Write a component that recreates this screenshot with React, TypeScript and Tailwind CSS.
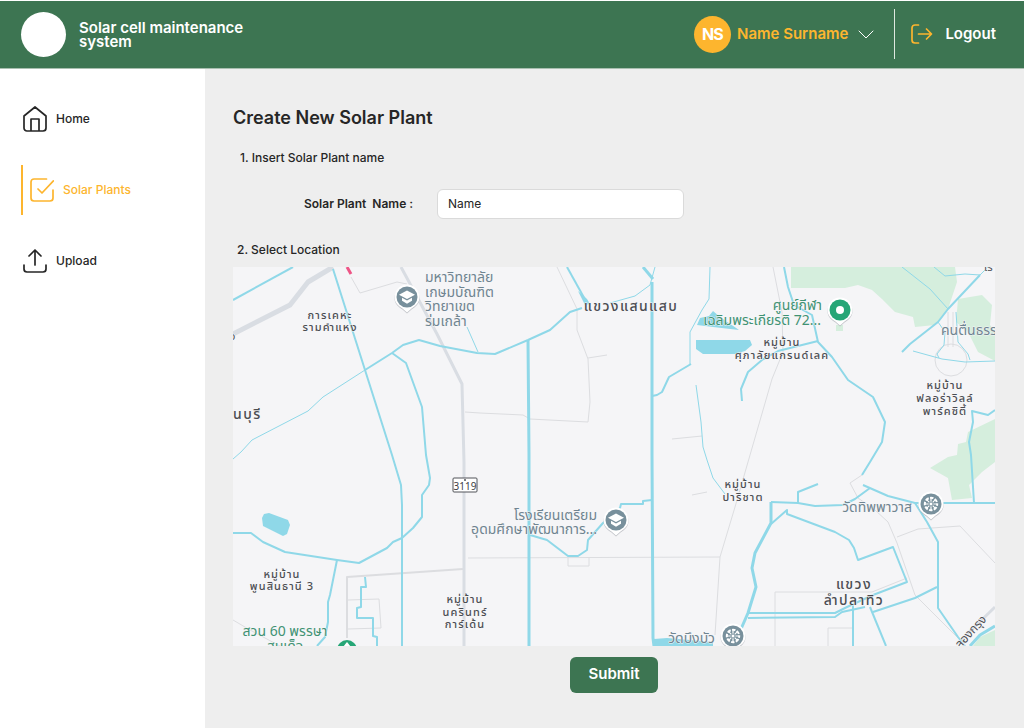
import { useState } from "react";

const WATER = "#8fd8e8";
const PATH_GREY = "#dcdde0";

type Line = { points: string; width: number };

const waterways: Line[] = [
  { points: "0,33 60,0", width: 2 },
  { points: "100,2 132,103 159,188 168,218 169,238 169,379", width: 2 },
  { points: "0,192 8,185 19,173 75,144 90,130 132,103", width: 1 },
  { points: "132,103 159,86 170,78 186,73 207,79 244,86 262,87 295,73 317,63 337,45 349,41", width: 2 },
  { points: "159,86 173,96 189,140 193,188 197,211 196,218 189,228 189,250 180,261 169,271 160,275 154,281 126,296 104,293 52,285 30,275 18,266 0,266", width: 2 },
  { points: "104,293 97,328 95,335 95,355 92,370 84,379", width: 2 },
  { points: "234,60 245,85", width: 1 },
  { points: "334,0 354,36", width: 2 },
  { points: "377,36 402,29 417,18 422,0", width: 1 },
  { points: "410,0 420,12", width: 3 },
  { points: "419,15 419,188 420,371 421,379", width: 3 },
  { points: "295,73 296,188 296,379", width: 3 },
  { points: "477,0 476,32 469,43 457,65 457,97", width: 1 },
  { points: "458,97 436,110 429,125 424,128 419,129", width: 2 },
  { points: "463,118 468,155 470,180 474,193 480,211 492,227", width: 1 },
  { points: "551,0 555,20 561,38 579,48 585,75 599,90 615,113 640,130 652,155 649,175 637,195 629,208", width: 2 },
  { points: "585,74 545,84 529,93 515,105 508,122 509,134", width: 2 },
  { points: "701,0 712,9 732,7 747,8 755,0", width: 1 },
  { points: "747,8 715,42 705,55 677,77 669,85", width: 2 },
  { points: "669,0 697,22 715,42", width: 1 },
  { points: "680,84 709,92 732,95 762,94", width: 1 },
  { points: "705,55 712,65 711,78 704,87 706,91", width: 1 },
  { points: "723,45 725,75 735,87 737,93", width: 1 },
  { points: "762,143 755,148 739,144 740,155 736,175 738,188 741,236", width: 2 },
  { points: "538,235 565,236 582,239 610,238 622,232 637,221", width: 2 },
  { points: "630,218 655,229 682,236 762,236", width: 2 },
  { points: "565,236 565,225 585,217", width: 2 },
  { points: "538,235 538,256 522,286 519,301 523,320 515,346 508,362", width: 3 },
  { points: "538,257 554,243 554,247 602,265 616,273 621,281 625,293 660,280 674,315 640,328 614,340 602,346 515,346", width: 2 },
  { points: "515,351 602,350 609,345 632,340", width: 2 },
  { points: "620,338 620,379", width: 2 },
  { points: "637,340 653,379", width: 2 },
  { points: "640,345 682,331 704,320", width: 2 },
  { points: "682,236 694,255 705,275 705,341 725,370 732,379", width: 2 },
  { points: "762,359 747,368 737,379", width: 3 },
  { points: "419,233 410,234 410,237 388,237 387,241 370,256 355,273 354,283 345,289 335,289 314,273 297,268", width: 2 },
  { points: "132,310 133,320 128,320 128,340 124,341 124,351 140,351 140,369 144,370 144,379", width: 2 },
];

const roads: Line[] = [
  { points: "118,10 127,26 164,15 174,17", width: 1 },
  { points: "232,145 247,146 290,148 297,152 355,155 357,135 355,92 344,63 344,42 324,0", width: 1 },
  { points: "355,91 374,88", width: 1 },
  { points: "439,172 469,169", width: 1 },
  { points: "459,228 474,225", width: 1 },
  { points: "540,0 549,45 550,85 539,112 515,195 502,240 487,290 482,368", width: 1 },
  { points: "629,208 617,216 625,231 642,243 655,255 664,276 682,328 725,371", width: 1 },
  { points: "664,270 685,262 727,259 762,296", width: 1 },
  { points: "542,379 542,325 639,325 674,311", width: 1 },
  { points: "595,379 595,361 619,361", width: 1 },
  { points: "235,291 487,290", width: 1 },
  { points: "335,291 335,299 356,299 356,291", width: 1 },
  { points: "114,371 114,310 230,302", width: 2 },
  { points: "115,333 146,332 148,361 115,362", width: 1 },
  { points: "0,353 17,363 47,379", width: 1 },
  { points: "715,45 715,80", width: 1 },
  { points: "720,45 720,80", width: 1 },
];

const highways: Line[] = [
  { points: "0,67 57,38 75,15 100,0", width: 5 },
  { points: "168,0 204,67 229,117 231,195 231,379", width: 3 },
  { points: "762,340 724,377", width: 3 },
];

const parks = [
  "558,0 722,0 724,15 715,42 702,58 682,60 680,50 662,45 649,32 639,23 625,18 612,21 558,21",
  "725,32 749,28 759,38 757,58 762,65 762,94 745,85 735,65 723,55",
  "762,152 735,165 733,175 725,177 724,188 715,190 697,201 715,211 719,233 739,231 736,218 749,205 762,195",
  "762,363 747,370 740,379 762,379",
  "603,58 610,58 610,64 603,64",
];

const lakes = [
  "464,58 467,51 476,49 480,44 487,50 506,63 480,60",
  "463,73 517,73 519,78 512,84 502,87 470,87 463,82",
  "29,251 31,247 36,246 55,253 57,258 54,267 50,269 30,259",
  "421,372 434,371 480,375 480,379 421,379",
  "345,24 354,32 357,37 352,38",
];

type Tone = "area" | "large" | "place" | "park";

const tones: Record<Tone, string> = {
  area: "fill-[#4b4d52] text-[11px] font-medium tracking-widest",
  large: "fill-[#4b4d52] text-[14px] font-medium tracking-widest",
  place: "fill-[#6f8490] text-[14px]",
  park: "fill-[#3f9273] text-[14px]",
};

type Label = { x: number; y: number; text: string; tone: Tone; anchor?: "start" | "middle" | "end" };

const labels: Label[] = [
  { x: 192, y: 15, text: "มหาวิทยาลัย", tone: "place", anchor: "start" },
  { x: 192, y: 30, text: "เกษมบัณฑิต", tone: "place", anchor: "start" },
  { x: 192, y: 44, text: "วิทยาเขต", tone: "place", anchor: "start" },
  { x: 192, y: 59, text: "ร่มเกล้า", tone: "place", anchor: "start" },
  { x: 97, y: 52, text: "การเคหะ", tone: "area" },
  { x: 97, y: 64, text: "รามคำแหง", tone: "area" },
  { x: -10, y: 152, text: "มีนบุรี", tone: "large", anchor: "start" },
  { x: 398, y: 44, text: "แขวงแสนแสบ", tone: "large" },
  { x: 589, y: 43, text: "ศูนย์กีฬา", tone: "park", anchor: "end" },
  { x: 588, y: 58, text: "เฉลิมพระเกียรติ 72...", tone: "park", anchor: "end" },
  { x: 549, y: 79, text: "หมู่บ้าน", tone: "area" },
  { x: 549, y: 92, text: "ศุภาลัยแกรนด์เลค", tone: "area" },
  { x: 708, y: 68, text: "คนตื่นธรรม", tone: "place", anchor: "start" },
  { x: 712, y: 122, text: "หมู่บ้าน", tone: "area" },
  { x: 712, y: 135, text: "ฟลอร่าวิลล์", tone: "area" },
  { x: 712, y: 148, text: "พาร์คซิตี้", tone: "area" },
  { x: 510, y: 221, text: "หมู่บ้าน", tone: "area" },
  { x: 510, y: 234, text: "ปาริชาต", tone: "area" },
  { x: 679, y: 245, text: "วัดทิพพาวาส", tone: "place", anchor: "end" },
  { x: 364, y: 253, text: "โรงเรียนเตรียม", tone: "place", anchor: "end" },
  { x: 364, y: 267, text: "อุดมศึกษาพัฒนาการ...", tone: "place", anchor: "end" },
  { x: 49, y: 311, text: "หมู่บ้าน", tone: "area" },
  { x: 49, y: 323, text: "พูนสินธานี 3", tone: "area" },
  { x: 232, y: 336, text: "หมู่บ้าน", tone: "area" },
  { x: 232, y: 349, text: "นครินทร์", tone: "area" },
  { x: 232, y: 361, text: "การ์เด้น", tone: "area" },
  { x: 621, y: 322, text: "แขวง", tone: "large" },
  { x: 621, y: 338, text: "ลำปลาทิว", tone: "large" },
  { x: 482, y: 376, text: "วัดบึงบัว", tone: "place", anchor: "end" },
  { x: 52, y: 369, text: "สวน 60 พรรษา", tone: "park" },
  { x: 52, y: 384, text: "สมเด็จ", tone: "park" },
];

function Polylines({ lines, stroke }: { lines: Line[]; stroke: string }) {
  return (
    <g fill="none" stroke={stroke} strokeLinejoin="round">
      {lines.map((line) => (
        <polyline key={line.points} points={line.points} strokeWidth={line.width} />
      ))}
    </g>
  );
}

function Pin({ x, y, kind }: { x: number; y: number; kind: "school" | "temple" | "park" }) {
  return (
    <g transform={`translate(${x} ${y})`}>
      <path d="M-12.500 1a12.500 12.500 0 1 1 25 0c0 6-4 9-8 11.500l-4.500 4-4.500-4c-4-2.500-8-5.500-8-11.500z" fill="#a9adb4" opacity="0.7" />
      <path d="M-12.500 0a12.500 12.500 0 1 1 25 0c0 6-4 9-8 11.500l-4.500 4-4.500-4c-4-2.500-8-5.500-8-11.500z" fill="#fff" />
      <circle r="10.500" fill={kind === "park" ? "#26a676" : "#78909c"} />
      {kind === "park" && <circle r="4" fill="#fff" />}
      {kind === "school" && (
        <path d="M0-6.500l8 4.200-8 4.200-8-4.200zM-5 .8L0 3.400 5 .8v3L0 6.800l-5-3z" fill="#fff" />
      )}
      {kind === "temple" && (
        <g fill="none" stroke="#fff">
          <circle r="6.200" strokeWidth="2" strokeDasharray="3.500 1.370" strokeDashoffset="1.750" />
          <path d="M0-6v12M-6 0H6M-4.200-4.200l8.400 8.400M4.200-4.200l-8.400 8.400" strokeWidth="1.200" />
          <circle r="2" fill="#fff" stroke="#78909c" strokeWidth="1" />
        </g>
      )}
    </g>
  );
}

function LocationMap() {
  return (
    <svg
      viewBox="0 0 762 379"
      role="img"
      aria-label="Map"
      className="block h-auto w-full bg-[#f5f5f7] font-['Noto_Sans_Thai','Noto_Sans','Open_Sans',sans-serif]"
    >
      {parks.map((points) => (
        <polygon key={points} points={points} fill="#d5eedd" />
      ))}
      <Polylines lines={roads} stroke={PATH_GREY} />
      <circle cx="718" cy="93" r="16" fill="none" stroke={PATH_GREY} />
      <Polylines lines={highways} stroke="#d9dde3" />
      <path d="M114 0l4 7" stroke="#ee5586" strokeWidth="3" />
      {lakes.map((points) => (
        <polygon key={points} points={points} fill={WATER} />
      ))}
      <Polylines lines={waterways} stroke={WATER} />
      <g stroke="#f5f5f7" strokeWidth="1" paintOrder="stroke">
        {labels.map((label) => (
          <text
            key={`${label.x}-${label.y}`}
            x={label.x}
            y={label.y}
            textAnchor={label.anchor ?? "middle"}
            className={tones[label.tone]}
          >
            {label.text}
          </text>
        ))}
        <text x="-3" y="73" className="fill-[#4b4d52] text-[11px]">ว</text>
        <text x="751" y="4" className="fill-[#4b4d52] text-[11px]">เร</text>
        <text transform="translate(727 382) rotate(-47)" className="fill-[#4b4d52] text-[12px]">ลองกรุง</text>
      </g>
      <rect x="220" y="211" width="24" height="14" rx="1" fill="#fff" stroke="#505358" />
      <circle cx="232" cy="213" r="1" fill="#505358" />
      <text x="232" y="223" textAnchor="middle" className="fill-[#3d4045] text-[10px]">3119</text>
      <Pin x={174} y={30} kind="school" />
      <Pin x={383} y={253} kind="school" />
      <Pin x={607} y={43} kind="park" />
      <Pin x={698} y={237} kind="temple" />
      <Pin x={500} y={369} kind="temple" />
      <circle cx="114" cy="383" r="10" fill="#26a676" />
      <path d="M114 375l4 5h-8z" fill="#fff" />
    </svg>
  );
}

const iconProps = {
  viewBox: "0 0 24 24",
  fill: "none",
  stroke: "currentColor",
  strokeWidth: 1.7,
  strokeLinecap: "round" as const,
  strokeLinejoin: "round" as const,
  "aria-hidden": true,
};

function HomeIcon() {
  return (
    <svg {...iconProps} viewBox="0 0 24 26" className="h-[26px] w-6">
      <path d="M1 10L12 1l11 9v12a3 3 0 0 1-3 3H4a3 3 0 0 1-3-3zM8 25V13h8v12" />
    </svg>
  );
}

function PlantsIcon() {
  return (
    <svg {...iconProps} className="size-6">
      <path d="M16.500 1H4a3 3 0 0 0-3 3v16a3 3 0 0 0 3 3h16a3 3 0 0 0 3-3v-8M8 11l4 4L23.400 2.800" />
    </svg>
  );
}

function UploadIcon() {
  return (
    <svg {...iconProps} className="size-6">
      <path d="M1 16v4a3 3 0 0 0 3 3h16a3 3 0 0 0 3-3v-4M12 16V1.200M6 7l6-6 6 6" />
    </svg>
  );
}

function LogoutIcon() {
  return (
    <svg {...iconProps} viewBox="0 0 22 20" className="h-5 w-[22px]">
      <path d="M7.500 1H4a3 3 0 0 0-3 3v12a3 3 0 0 0 3 3h3.500M7.500 10H20M15.500 5l5 5-5 5" />
    </svg>
  );
}

export default function App() {
  const [name, setName] = useState("Name");

  return (
    <div className="flex min-h-screen flex-col bg-white font-[Inter,sans-serif] text-[#262626]">
      <header className="flex h-[69px] items-center border-t border-b border-t-white border-b-[#a9bfb0] bg-[#3d7552] pr-7 pl-[21px] text-white">
        <div className="size-[45px] shrink-0 rounded-full bg-white" />
        <p className="ml-[13px] w-[180px] text-[15px] leading-[14px] font-semibold">Solar cell maintenance system</p>
        <div className="ml-auto flex items-center pb-px">
          <button type="button" className="flex items-center text-[#fdb52e]">
            <span className="flex size-[37px] items-center justify-center rounded-full bg-[#fdb52e] text-[16px] font-bold tracking-tighter text-white">
              NS
            </span>
            <span className="ml-1.5 text-[15px] font-semibold">Name Surname</span>
            <svg viewBox="0 0 16 9" className="ml-2.5 h-[9px] w-4" fill="none" stroke="#fff" strokeLinecap="round" aria-hidden="true">
              <path d="M1 1l7 7 7-7" />
            </svg>
          </button>
          <div className="ml-5 h-[50px] w-px bg-[#dfe8e0]" />
          <a href="#logout" className="ml-4 flex items-center gap-3 text-[15px] font-semibold">
            <span className="text-[#fdb52e]">
              <LogoutIcon />
            </span>
            Logout
          </a>
        </div>
      </header>

      <div className="flex flex-1">
        <nav className="flex w-[205px] shrink-0 flex-col gap-[21px] pt-[25px] pl-[21px] text-[12px] font-medium">
          <a href="#home" className="flex h-[50px] items-center gap-[9px] pl-0.5">
            <HomeIcon />
            Home
          </a>
          <a href="#plants" aria-current="page" className="flex h-[50px] items-center gap-[9px] border-l-2 border-[#fdb52e] pl-[7px] text-[#fdb52e]">
            <PlantsIcon />
            Solar Plants
          </a>
          <a href="#upload" className="flex h-[50px] items-center gap-[9px] pl-0.5">
            <UploadIcon />
            Upload
          </a>
        </nav>

        <main className="min-w-0 flex-1 bg-[#eee] pr-[29px] pl-7">
          <form onSubmit={(event) => event.preventDefault()}>
            <h1 className="pt-[35px] text-[18px] leading-7 font-semibold">Create New Solar Plant</h1>
            <h2 className="mt-4 pl-[7px] text-[12px] leading-5 font-medium">1. Insert Solar Plant name</h2>
            <div className="mt-[21px] flex items-center pl-[71px]">
              <label htmlFor="plant-name" className="w-[133px] text-[12px] font-semibold whitespace-pre">
                Solar Plant  Name :
              </label>
              <input
                id="plant-name"
                type="text"
                value={name}
                onChange={(event) => setName(event.target.value)}
                className="h-[30px] w-[247px] rounded-md border border-[#dadada] bg-white px-2.5 pb-0.5 text-[12px] outline-none"
              />
            </div>
            <h2 className="mt-[21px] pl-1 text-[12px] leading-5 font-medium">2. Select Location</h2>
            <div className="mt-[7px]">
              <LocationMap />
            </div>
            <div className="flex justify-center pt-[11px]">
              <button type="submit" className="h-9 w-[88px] rounded-md bg-[#3d7552] pb-px text-[15px] font-semibold text-white">
                Submit
              </button>
            </div>
          </form>
        </main>
      </div>
    </div>
  );
}
